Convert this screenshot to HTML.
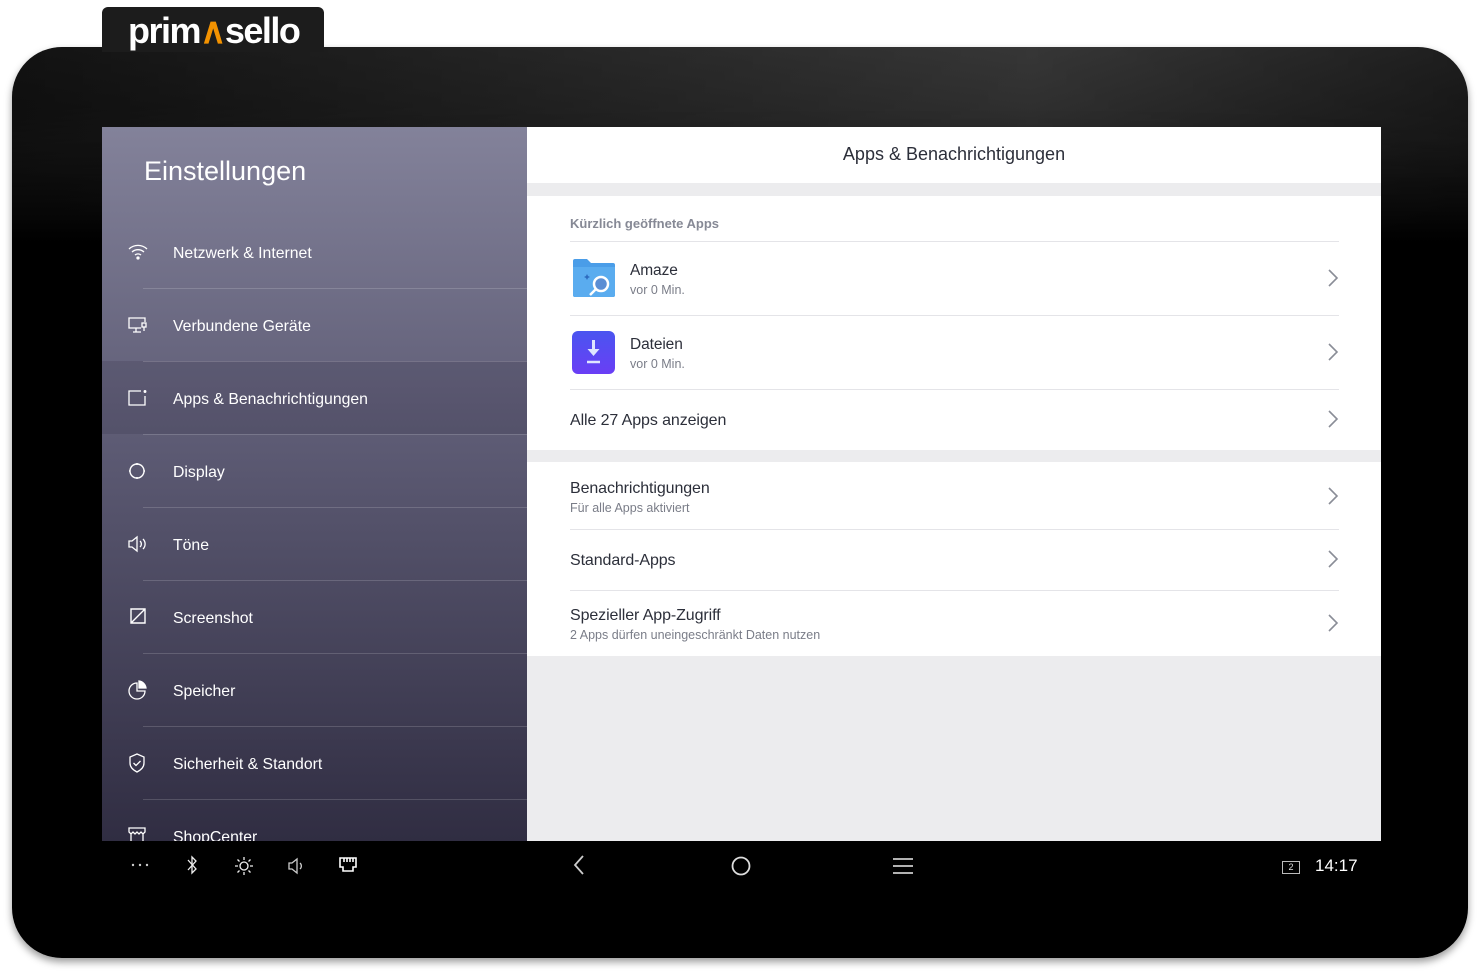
<!DOCTYPE html>
<html><head><meta charset="utf-8"><style>
*{margin:0;padding:0;box-sizing:border-box}
body{width:1480px;height:975px;background:#fff;position:relative;overflow:hidden;font-family:"Liberation Sans",Roboto,sans-serif}
.abs{position:absolute}
#logo{left:102px;top:7px;width:222px;height:45px;background:#1c1c1c;border-radius:6px 6px 0 0}
#logo span{position:absolute;left:26px;top:3px;font-size:36px;color:#fff;letter-spacing:-1.5px;font-weight:bold}
#frame{left:12px;top:47px;width:1456px;height:911px;border-radius:50px;background:linear-gradient(180deg,#262626 0%,#1a1a1a 10%,#000 22%,#000 100%);box-shadow:0 4px 8px rgba(0,0,0,.4);overflow:hidden}
#frame:before{content:"";position:absolute;left:0;top:0;width:100%;height:100%;background:linear-gradient(90deg,rgba(0,0,0,.5),rgba(255,255,255,.08) 70%,rgba(0,0,0,.2));-webkit-mask-image:linear-gradient(180deg,#000 0,#000 60px,transparent 200px);mask-image:linear-gradient(180deg,#000 0,#000 60px,transparent 200px)}
#side{left:102px;top:127px;width:425px;height:714px;background:linear-gradient(180deg,#83829a 0%,#5c5a73 45%,#302d42 100%);overflow:hidden}
#side h1{position:absolute;left:42px;top:29px;font-size:27px;font-weight:normal;color:#fff}
.it{position:absolute;left:0;width:425px;height:73px}
.it .t{position:absolute;left:71px;top:50%;transform:translateY(-50%);margin-top:2px;color:#fff;font-size:15.8px}
.it svg{position:absolute;left:25px;top:50%;margin-top:-10px}
.dv{position:absolute;left:41px;width:384px;height:1px;background:rgba(255,255,255,.16)}
#main{left:527px;top:127px;width:854px;height:714px;background:#ececee}
.w{position:absolute;left:0;width:854px;background:#fff}
.ln{position:absolute;left:43px;width:769px;height:1px;background:#e4e4e8}
.tt{position:absolute;left:43px;color:#2c2f3a;font-size:16px;letter-spacing:-.1px}
.st{position:absolute;left:43px;color:#7a7d88;font-size:12.5px}
.ch{position:absolute;left:800px}
#nav{left:102px;top:841px;width:1279px;height:39px;background:#000}
</style></head><body>
<div id="frame" class="abs"></div>
<div id="logo" class="abs"><span>prim<b style="color:#f39200">∧</b>sello</span></div>
<div id="side" class="abs">
<h1>Einstellungen</h1>
<div class="it" style="top:234px;background:rgba(20,18,40,.13)"></div>
<div class="it" style="top:88px"><svg width="22" height="20" viewBox="0 0 22 20" fill="none" stroke="#fff" stroke-width="1.3"><path d="M2 7a13 13 0 0 1 18 0M5 10a9 9 0 0 1 12 0M8 13a4.5 4.5 0 0 1 6 0"/><circle cx="11" cy="16" r="1" fill="#fff"/></svg><span class="t">Netzwerk &amp; Internet</span></div>
<div class="dv" style="top:161px"></div>
<div class="it" style="top:161px"><svg width="22" height="20" viewBox="0 0 22 20" fill="none" stroke="#fff" stroke-width="1.3"><path d="M14 13H2V3h16v4M6 17h8M9 13v4"/><rect x="15" y="8" width="4" height="4"/><path d="M17 12v4"/></svg><span class="t">Verbundene Geräte</span></div>
<div class="dv" style="top:234px"></div>
<div class="it" style="top:234px"><svg width="22" height="20" viewBox="0 0 22 20" fill="none" stroke="#fff" stroke-width="1.3"><path d="M14 3H2v14h16V8"/><circle cx="18" cy="3.5" r=".8" fill="#fff"/></svg><span class="t">Apps &amp; Benachrichtigungen</span></div>
<div class="dv" style="top:307px"></div>
<div class="it" style="top:307px"><svg width="22" height="20" viewBox="0 0 22 20" fill="none" stroke="#fff" stroke-width="1.4"><circle cx="10" cy="10" r="7"/><path d="M10 2v2M10 16v2M3 10h-1M18 10h-1"/></svg><span class="t">Display</span></div>
<div class="dv" style="top:380px"></div>
<div class="it" style="top:380px"><svg width="22" height="20" viewBox="0 0 22 20" fill="none" stroke="#fff" stroke-width="1.3"><path d="M2 7h3l5-4v14l-5-4H2z M13 7a4 4 0 0 1 0 6M16 5a7 7 0 0 1 0 10"/></svg><span class="t">Töne</span></div>
<div class="dv" style="top:453px"></div>
<div class="it" style="top:453px"><svg width="22" height="20" viewBox="0 0 22 20" fill="none" stroke="#fff" stroke-width="1.4"><path d="M4 2v14h14V2zM4 16L18 2"/></svg><span class="t">Screenshot</span></div>
<div class="dv" style="top:526px"></div>
<div class="it" style="top:526px"><svg width="22" height="20" viewBox="0 0 22 20" fill="none" stroke="#fff" stroke-width="1.3"><path d="M10 3a8 8 0 1 0 8 8h-8z"/><path d="M12 1a8 8 0 0 1 7 7h-7z" fill="#fff"/></svg><span class="t">Speicher</span></div>
<div class="dv" style="top:599px"></div>
<div class="it" style="top:599px"><svg width="22" height="20" viewBox="0 0 22 20" fill="none" stroke="#fff" stroke-width="1.3"><path d="M10 1l7 3v6c0 4-3 7-7 9-4-2-7-5-7-9V4z M6.5 10l2.5 2.5 4.5-4.5"/></svg><span class="t">Sicherheit &amp; Standort</span></div>
<div class="dv" style="top:672px"></div>
<div class="it" style="top:672px"><svg width="22" height="20" viewBox="0 0 22 20" fill="none" stroke="#fff" stroke-width="1.3"><path d="M2 2h16v4l-2 2-2-2-2 2-2-2-2 2-2-2-2 2-2-2zM4 8v10h12V8"/></svg><span class="t">ShopCenter</span></div>
</div>
<div id="main" class="abs">
<div class="w" style="top:0;height:56px"><div style="position:absolute;left:0;width:854px;top:17px;text-align:center;font-size:18px;color:#2c2f3a">Apps &amp; Benachrichtigungen</div></div>
<div class="w" style="top:69px;height:254px">
<div class="st" style="top:20px;font-size:13px;font-weight:bold;color:#868995">Kürzlich geöffnete Apps</div>
<div class="ln" style="top:45px"></div>
<svg class="abs" style="left:44px;top:61px" width="46" height="42" viewBox="0 0 46 42"><path d="M2 4q0-2 2-2h12l4 4h22q2 0 2 2v30q0 2-2 2H4q-2 0-2-2z" fill="#4a9de8"/><path d="M2 10h42v28q0 2-2 2H4q-2 0-2-2z" fill="#5aacef"/><circle cx="30" cy="27" r="7" fill="#5b8ed4" stroke="#fff" stroke-width="2.5"/><path d="M25 32l-6 6" stroke="#fff" stroke-width="2.5"/><path d="M16 17l1 2 2 1-2 1-1 2-1-2-2-1 2-1z" fill="#2e6bbf"/></svg>
<div class="tt" style="left:103px;top:66px;font-size:15.5px">Amaze</div>
<div class="st" style="left:103px;top:87px">vor 0 Min.</div>
<svg class="ch" style="top:72px" width="14" height="20" viewBox="0 0 14 20"><path d="M2 2l8 8-8 8" fill="none" stroke="#8a8d97" stroke-width="1.6"/></svg>
<div class="ln" style="top:119px"></div>
<div class="abs" style="left:45px;top:135px;width:43px;height:43px;border-radius:6px;background:linear-gradient(180deg,#4a55f0,#6a3ef5)"><svg width="43" height="43" viewBox="0 0 43 43"><path d="M21.5 9v13" stroke="#dfe6ff" stroke-width="3"/><path d="M15.5 18l6 7 6-7z" fill="#dfe6ff"/><path d="M15 31h13" stroke="#dfe6ff" stroke-width="2.5"/></svg></div>
<div class="tt" style="left:103px;top:140px;font-size:15.5px">Dateien</div>
<div class="st" style="left:103px;top:161px">vor 0 Min.</div>
<svg class="ch" style="top:146px" width="14" height="20" viewBox="0 0 14 20"><path d="M2 2l8 8-8 8" fill="none" stroke="#8a8d97" stroke-width="1.6"/></svg>
<div class="ln" style="top:193px"></div>
<div class="tt" style="top:216px">Alle 27 Apps anzeigen</div>
<svg class="ch" style="top:213px" width="14" height="20" viewBox="0 0 14 20"><path d="M2 2l8 8-8 8" fill="none" stroke="#8a8d97" stroke-width="1.6"/></svg>
</div>
<div class="w" style="top:335px;height:194px">
<div class="tt" style="top:18px">Benachrichtigungen</div>
<div class="st" style="top:39px">Für alle Apps aktiviert</div>
<svg class="ch" style="top:24px" width="14" height="20" viewBox="0 0 14 20"><path d="M2 2l8 8-8 8" fill="none" stroke="#8a8d97" stroke-width="1.6"/></svg>
<div class="ln" style="top:67px"></div>
<div class="tt" style="top:90px">Standard-Apps</div>
<svg class="ch" style="top:87px" width="14" height="20" viewBox="0 0 14 20"><path d="M2 2l8 8-8 8" fill="none" stroke="#8a8d97" stroke-width="1.6"/></svg>
<div class="ln" style="top:128px"></div>
<div class="tt" style="top:145px">Spezieller App-Zugriff</div>
<div class="st" style="top:166px">2 Apps dürfen uneingeschränkt Daten nutzen</div>
<svg class="ch" style="top:151px" width="14" height="20" viewBox="0 0 14 20"><path d="M2 2l8 8-8 8" fill="none" stroke="#8a8d97" stroke-width="1.6"/></svg>
</div>
</div>
<div id="nav" class="abs">
<svg class="abs" style="left:28px;top:20px" width="22" height="8"><circle cx="3" cy="4" r="1.2" fill="#ccc"/><circle cx="10" cy="4" r="1.2" fill="#ccc"/><circle cx="17" cy="4" r="1.2" fill="#ccc"/></svg>
<svg class="abs" style="left:80px;top:14px" width="20" height="20" viewBox="0 0 20 20" fill="none" stroke="#eee" stroke-width="1.3"><path d="M6 5l8 9-4 4V2l4 4-8 9"/></svg>
<svg class="abs" style="left:132px;top:15px" width="20" height="20" viewBox="0 0 20 20" fill="none" stroke="#eee" stroke-width="1.3"><circle cx="10" cy="10" r="4"/><path d="M10 1v3M10 16v3M1 10h3M16 10h3M3.5 3.5l2 2M14.5 14.5l2 2M3.5 16.5l2-2M14.5 5.5l2-2"/></svg>
<svg class="abs" style="left:185px;top:15px" width="20" height="20" viewBox="0 0 20 20" fill="none" stroke="#ccc" stroke-width="1.3"><path d="M2 7h3l5-4v14l-5-4H2zM13 7a4 4 0 0 1 0 6"/></svg>
<svg class="abs" style="left:237px;top:16px" width="18" height="16" viewBox="0 0 18 16" fill="none" stroke="#fff" stroke-width="1.6"><path d="M1 1h16v9h-3v4H4v-4H1z M5 1v4M8 1v4M11 1v4M14 1v4"/></svg>
<svg class="abs" style="left:470px;top:13px" width="14" height="22" viewBox="0 0 14 22"><path d="M11 2L3 11l8 9" fill="none" stroke="#ccc" stroke-width="1.8"/></svg>
<svg class="abs" style="left:628px;top:14px" width="22" height="22"><circle cx="11" cy="11" r="8.5" fill="none" stroke="#ddd" stroke-width="1.8"/></svg>
<svg class="abs" style="left:790px;top:16px" width="22" height="18"><path d="M1 2h20M1 9h20M1 16h20" stroke="#ccc" stroke-width="1.8"/></svg>
<div class="abs" style="left:1180px;top:20px;width:18px;height:13px;border:1.3px solid #bbb;font-size:9px;color:#ddd;text-align:center;line-height:11px">2</div>
<div class="abs" style="left:1213px;top:15px;color:#fff;font-size:17px">14:17</div>
</div>
</body></html>
